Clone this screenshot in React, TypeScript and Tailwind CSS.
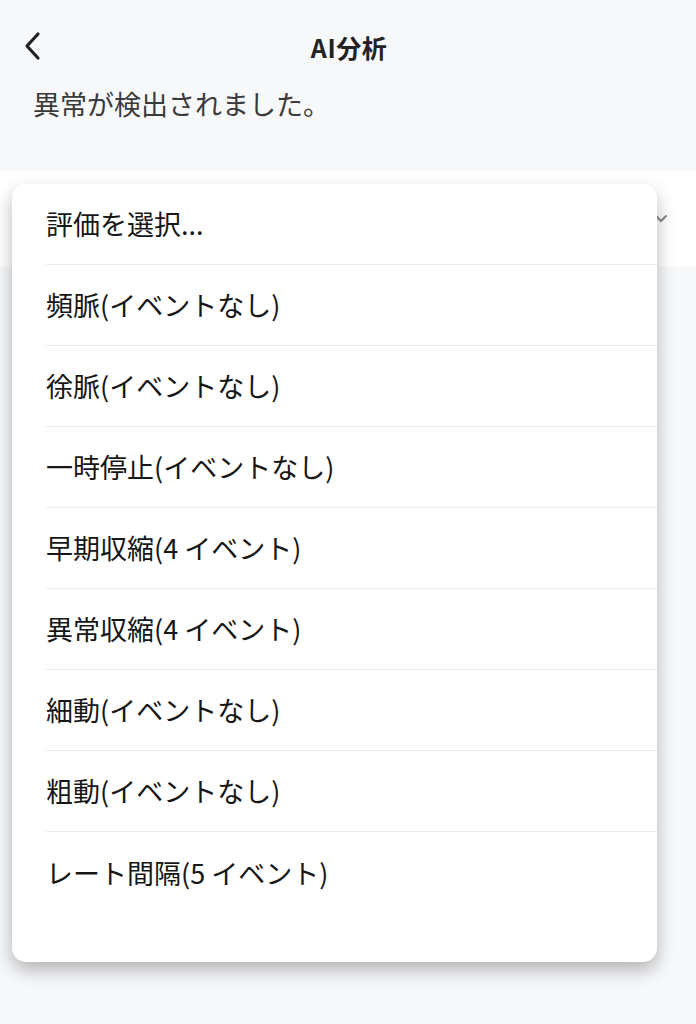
import React from "react";

const items = [
  "評価を選択...",
  "頻脈(イベントなし)",
  "徐脈(イベントなし)",
  "一時停止(イベントなし)",
  "早期収縮(4 イベント)",
  "異常収縮(4 イベント)",
  "細動(イベントなし)",
  "粗動(イベントなし)",
  "レート間隔(5 イベント)",
];

export default function App() {
  return (
    <div
      className="relative w-[696px] h-[1024px] overflow-hidden bg-[#f7f8fa] text-[#222]"
      style={{ fontFamily: '"Noto Sans CJK JP", "Noto Sans", sans-serif' }}
    >
      <div className="h-[171px] flex flex-col">
        <div className="relative h-[94px] flex items-center justify-center">
          <button className="absolute left-[20px] top-[30px] w-[26px] h-[32px] flex items-center justify-center">
            <svg width="22" height="30" viewBox="0 0 22 30" fill="none">
              <path d="M16 3 L5 15 L16 27" stroke="#222" strokeWidth="3.2" strokeLinecap="round" strokeLinejoin="round" />
            </svg>
          </button>
          <h1 className="text-[25px] font-bold leading-none text-[#222] pl-[2px] tracking-[0.5px]">AI分析</h1>
        </div>
        <p className="pl-[33px] text-[27px] leading-none text-[#3a3a3a] mt-[-4px]">異常が検出されました。</p>
      </div>
      <div className="h-[95px] bg-white flex items-center justify-end pr-[28px]">
        <svg width="14" height="10" viewBox="0 0 14 10" fill="none">
          <path d="M2 2 L7 7 L12 2" stroke="#888" strokeWidth="2" strokeLinecap="round" />
        </svg>
      </div>

      <div className="absolute left-[12px] top-[184px] w-[645px] h-[778px] rounded-[14px] bg-white shadow-[0_8px_18px_rgba(0,0,0,0.28)] overflow-hidden">
        {items.map((t, i) => (
          <div
            key={t}
            className={`ml-[34px] h-[81px] flex items-center text-[27px] leading-none text-[#161616] ${
              i < items.length - 1 ? "border-b border-[#ececec]" : ""
            }`}
          >
            <span className="pb-[1px]">{t}</span>
          </div>
        ))}
      </div>
    </div>
  );
}
